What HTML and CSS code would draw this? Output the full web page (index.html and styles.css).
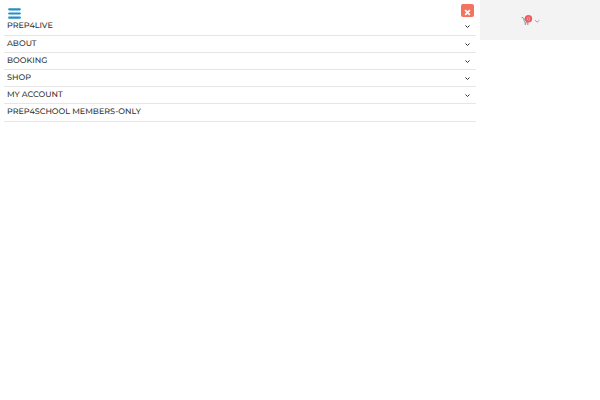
FILE: index.html
```html
<!DOCTYPE html>
<html lang="en">
<head>
    <meta charset="UTF-8">
    <meta name="viewport" content="width=device-width, initial-scale=1.0">
    <title>Prep4School</title>
    <link rel="stylesheet" href="styles.css">
</head>
<body>
    <header class="header">
        <a href="#" class="cart" aria-label="Cart">
            <svg class="cart-icon" viewBox="0 0 19 11" aria-hidden="true">
                <path d="M0.5 2.5h1.5l2 5.2h3.5M2.6 4h3" fill="none" stroke="#888" stroke-width="0.8"/>
                <circle cx="4.3" cy="9" r="0.8" fill="#777"/>
                <circle cx="6.8" cy="9" r="0.8" fill="#777"/>
                <circle cx="7.5" cy="3.8" r="3.7" fill="#ee5a5f"/>
                <ellipse cx="7.5" cy="3.8" rx="1.2" ry="1.6" fill="none" stroke="#fbc4c4" stroke-width="0.6"/>
                <path d="M14 5.2l2.2 2 2.2-2" fill="none" stroke="#999" stroke-width="0.9"/>
            </svg>
        </a>
    </header>

    <div class="drawer">
        <div class="drawer-top">
            <button class="menu-btn" aria-label="Menu">
                <svg viewBox="0 0 13 11" aria-hidden="true"><path d="M1.2 1.3h10.6M1.2 5.5h10.6M1.2 9.7h10.6" stroke="#2490c8" stroke-width="2.2" stroke-linecap="round"/></svg>
            </button>
            <button class="close-btn" aria-label="Close">
                <svg viewBox="0 0 6 6" aria-hidden="true"><path d="M1 1l4 4M5 1L1 5" stroke="#fff" stroke-width="1.5"/></svg>
            </button>
        </div>
        <nav>
            <ul class="menu">
                <li><a href="#">PREP4LIVE</a><svg class="arrow" viewBox="0 0 5 3" aria-hidden="true"><path d="M0.5 0.5l2 2 2-2"/></svg></li>
                <li><a href="#">ABOUT</a><svg class="arrow" viewBox="0 0 5 3" aria-hidden="true"><path d="M0.5 0.5l2 2 2-2"/></svg></li>
                <li><a href="#">BOOKING</a><svg class="arrow" viewBox="0 0 5 3" aria-hidden="true"><path d="M0.5 0.5l2 2 2-2"/></svg></li>
                <li><a href="#">SHOP</a><svg class="arrow" viewBox="0 0 5 3" aria-hidden="true"><path d="M0.5 0.5l2 2 2-2"/></svg></li>
                <li><a href="#">MY ACCOUNT</a><svg class="arrow" viewBox="0 0 5 3" aria-hidden="true"><path d="M0.5 0.5l2 2 2-2"/></svg></li>
                <li><a href="#">PREP4SCHOOL MEMBERS-ONLY</a></li>
            </ul>
        </nav>
    </div>
</body>
</html>
```

FILE: styles.css
```css
* {
    box-sizing: border-box;
}
body {
    margin: 0;
    background-color: #fff;
    color: #333;
    font-family: Montserrat, Inter, sans-serif;
    font-size: 8px;
    font-weight: 500;
    text-rendering: geometricPrecision;
}
.header {
    display: flex;
    justify-content: flex-end;
    align-items: center;
    height: 40px;
    padding-right: 10%;
    background-color: #f3f3f3;
}
.cart {
    display: flex;
}
.cart-icon {
    width: 19px;
    height: 11px;
}
/* Off-canvas menu, open over the page */
.drawer {
    position: absolute;
    top: 0;
    left: 0;
    width: 80%;
    height: 100vh;
    padding: 4px 4px 0;
    background-color: #fff;
}
.drawer-top {
    display: flex;
    justify-content: space-between;
    height: 14px;
    padding: 0 2px 0 4px;
}
.menu-btn {
    display: flex;
    width: 13px;
    height: 11px;
    margin-top: 4px;
    padding: 0;
    border: none;
    background: none;
    cursor: pointer;
}
.menu-btn svg {
    width: 13px;
    height: 11px;
}
.close-btn {
    display: flex;
    align-items: flex-end;
    justify-content: center;
    width: 13px;
    height: 13px;
    padding: 0 0 1px;
    border: none;
    border-radius: 2px;
    background-color: #f4735e;
    cursor: pointer;
}
.close-btn svg {
    width: 7px;
    height: 7px;
}
.menu {
    margin: 0;
    padding: 0;
    list-style: none;
}
.menu li {
    display: flex;
    justify-content: space-between;
    align-items: center;
    padding: 0 6px 0 3px;
    border-bottom: 1px solid #e6e6e6;
}
.menu li:first-child,
.menu li:last-child {
    padding-bottom: 1px;
}
.menu a {
    color: #333;
    line-height: 16px;
    text-decoration: none;
}
.arrow {
    width: 5px;
    height: 3px;
    fill: none;
    stroke: #333;
    stroke-width: 1;
}
```
